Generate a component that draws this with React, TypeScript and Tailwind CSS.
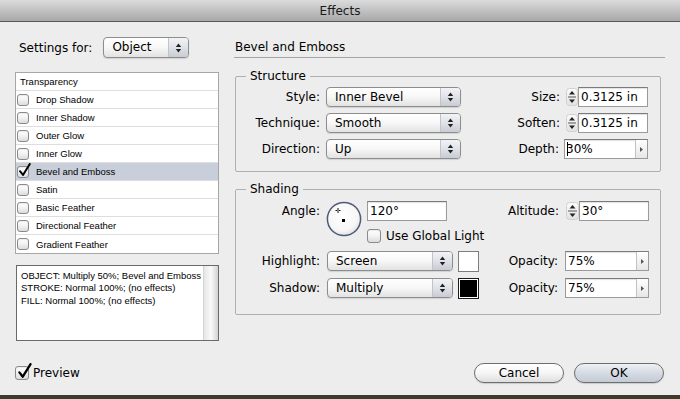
import React from "react";

function CheckBox({ checked = false, big = false }: { checked?: boolean; big?: boolean }) {
  return (
    <span
      className={`relative inline-block shrink-0 rounded-[3px] border border-[#8a8a8a] bg-gradient-to-b from-white via-[#f2f2f2] to-[#dcdcdc] shadow-[inset_0_1px_1px_rgba(0,0,0,0.08)] ${
        big ? "w-[14px] h-[14px]" : "w-[12px] h-[12px]"
      }`}
    >
      {checked && (
        <svg
          className={`absolute ${big ? "-top-[4px] left-[1px] w-[15px] h-[16px]" : "-top-[4px] left-[0px] w-[13px] h-[14px]"}`}
          viewBox="0 0 13 14"
        >
          <path d="M2 8.2 L5 12 L11.8 1" fill="none" stroke="#000" strokeWidth="2" strokeLinecap="round" strokeLinejoin="round" />
        </svg>
      )}
    </span>
  );
}

function UpDown() {
  return (
    <svg width="7" height="12" viewBox="0 0 7 12">
      <polygon points="0.8,5 3.5,1.6 6.2,5" fill="#222" />
      <polygon points="0.8,7 3.5,10.4 6.2,7" fill="#222" />
    </svg>
  );
}

function Popup({ value, className }: { value: string; className: string }) {
  return (
    <div
      className={`flex h-[20px] shrink-0 overflow-hidden rounded-[4px] border border-[#8d8d8d] bg-gradient-to-b from-white via-[#f7f7f7] to-[#e2e2e2] shadow-[0_1px_1px_rgba(0,0,0,0.12)] ${className}`}
    >
      <span className="flex-1 pl-[8px] text-[12px] leading-[18px]">{value}</span>
      <span className="flex w-[20px] items-center justify-center border-l border-[#c0c3c8] bg-gradient-to-b from-[#f2f3f6] via-[#dfe2e7] to-[#c8ccd3]">
        <UpDown />
      </span>
    </div>
  );
}

function Stepper({ w = 12 }: { w?: number }) {
  return (
    <svg width={w} height="20" viewBox={`0 0 ${w} 20`} className="shrink-0">
      <defs>
        <linearGradient id="stp" x1="0" y1="0" x2="0" y2="1">
          <stop offset="0" stopColor="#fbfbfb" />
          <stop offset="1" stopColor="#e2e2e2" />
        </linearGradient>
      </defs>
      <rect x="0.5" y="1.5" width={w - 1} height="17" rx="3" fill="url(#stp)" stroke="#d0d0d0" />
      <polygon points={`${w / 2 - 3},7.5 ${w / 2},4 ${w / 2 + 3},7.5`} fill="#222" />
      <line x1="2" x2={w - 2} y1="10" y2="10" stroke="#555" strokeWidth="1" />
      <polygon points={`${w / 2 - 3},12.5 ${w / 2},16 ${w / 2 + 3},12.5`} fill="#222" />
    </svg>
  );
}

function Field({ value, className, caret = false }: { value: string; className: string; caret?: boolean }) {
  return (
    <div
      className={`flex h-[20px] shrink-0 items-center border border-[#9a9a9a] border-t-[#7b7b7b] bg-white pl-[2px] text-[12px] leading-[18px] shadow-[inset_0_1px_1px_rgba(0,0,0,0.12)] ${className}`}
    >
      {caret && <span className="-mr-[2px] inline-block h-[14px] w-[1px] bg-black" />}
      <span>{value}</span>
    </div>
  );
}

function ComboField({ value, caret = false }: { value: string; caret?: boolean }) {
  return (
    <div className="flex h-[20px] w-[84px] shrink-0 border border-[#9a9a9a] border-t-[#7b7b7b] bg-white shadow-[inset_0_1px_1px_rgba(0,0,0,0.12)]">
      <div className="flex flex-1 items-center pl-[2px] text-[12px] leading-[18px]">
        {caret && <span className="-mr-[2px] inline-block h-[14px] w-[1px] bg-black" />}
        <span>{value}</span>
      </div>
      <div className="flex w-[12px] items-center justify-center border-l border-[#c2c2c2] bg-gradient-to-b from-white to-[#e6e6e6]">
        <svg width="5" height="7" viewBox="0 0 5 7">
          <polygon points="1,1 4,3.5 1,6" fill="#555" />
        </svg>
      </div>
    </div>
  );
}

function AngleDial() {
  return (
    <svg width="36" height="36" viewBox="0 0 36 36" className="shrink-0">
      <defs>
        <radialGradient id="dial" cx="0.45" cy="0.4" r="0.65">
          <stop offset="0" stopColor="#ffffff" />
          <stop offset="0.7" stopColor="#f6f6f6" />
          <stop offset="1" stopColor="#dcdcdc" />
        </radialGradient>
      </defs>
      <circle cx="18" cy="18" r="16.6" fill="url(#dial)" stroke="#4d5b79" strokeWidth="1.5" />
      <line x1="9.5" x2="14.5" y1="9.5" y2="9.5" stroke="#111" strokeWidth="1" strokeDasharray="2 1" />
      <line x1="12" x2="12" y1="7" y2="12" stroke="#111" strokeWidth="1" strokeDasharray="2 1" />
      <rect x="16" y="18" width="3" height="3" fill="#000" />
    </svg>
  );
}

function PillButton({ label, primary = false }: { label: string; primary?: boolean }) {
  return (
    <div
      className={`flex h-[20px] w-[90px] items-center justify-center rounded-full border border-[#6e6e6e] text-[12px] leading-[18px] shadow-[0_1px_1px_rgba(0,0,0,0.15)] ${
        primary
          ? "bg-gradient-to-b from-[#eef1f5] via-[#d5dbe3] to-[#c3cbd6]"
          : "bg-gradient-to-b from-white via-[#f6f6f6] to-[#dedede]"
      }`}
    >
      {label}
    </div>
  );
}

const effects = [
  "Drop Shadow",
  "Inner Shadow",
  "Outer Glow",
  "Inner Glow",
  "Bevel and Emboss",
  "Satin",
  "Basic Feather",
  "Directional Feather",
  "Gradient Feather",
];

export default function App() {
  return (
    <div className="h-[399px] w-[680px] overflow-hidden bg-[#3b3d2a] font-['DejaVu_Sans','Liberation_Sans',sans-serif] text-black">
      <div className="flex h-[395px] flex-col bg-[#ededed]">
        {/* title bar */}
        <div className="flex h-[22px] shrink-0 items-center justify-center border-b border-[#595959] bg-gradient-to-b from-[#dcdcdc] to-[#a8a8a8] text-[12px] leading-[16px] text-[#1a1a1a]">
          Effects
        </div>

        <div className="flex flex-1">
          {/* left column */}
          <div className="flex w-[219px] shrink-0 flex-col pl-[15px] pt-[15px]">
            <div className="flex h-[21px] items-center">
              <span className="ml-[4px] text-[12px] leading-[16px]">Settings for:</span>
              <Popup value="Object" className="ml-[11px] h-[21px] w-[86px]" />
            </div>

            <div className="mt-[14px] w-[204px] border border-[#a7a7a7] bg-white font-['Liberation_Sans',sans-serif] text-[9.5px] leading-[17px]">
              <div className="h-[18px] border-b border-[#dedede] pl-[4px]">Transparency</div>
              {effects.map((name, i) => (
                <div
                  key={name}
                  className={`flex h-[18px] items-center pl-[1px] ${i < effects.length - 1 ? "border-b border-[#dedede]" : ""} ${
                    name === "Bevel and Emboss" ? "bg-[#c9cfda]" : ""
                  }`}
                >
                  <CheckBox checked={name === "Bevel and Emboss"} />
                  <span className="ml-[7px]">{name}</span>
                </div>
              ))}
            </div>

            <div className="ml-[1px] mt-[11px] flex h-[76px] w-[203px] border border-[#6a6a6a] bg-white">
              <div className="flex-1 pl-[4px] pt-[4px] font-['Liberation_Sans',sans-serif] text-[9.5px] leading-[12.3px]">
                <div>OBJECT: Multiply 50%; Bevel and Emboss</div>
                <div>STROKE: Normal 100%; (no effects)</div>
                <div>FILL: Normal 100%; (no effects)</div>
              </div>
              <div className="w-[15px] border-l border-[#d4d4d4] bg-gradient-to-r from-[#e6e6e6] via-[#fafafa] to-[#d2d2d2]" />
            </div>
          </div>

          {/* right column */}
          <div className="ml-[15px] flex w-[431px] flex-col pt-[15px]">
            <div className="h-[21px] border-b border-[#a4a4a4] pl-[1px] text-[12px] leading-[20px]">Bevel and Emboss</div>

            <fieldset className="ml-[1px] mt-[10px] w-[426px] rounded-[2px] border border-[#b0b0b0] pb-[12px] pr-[12px] pt-[3px]">
              <legend className="ml-[10px] px-[4px] text-[12px] leading-[16px]">Structure</legend>
              <div className="flex flex-col gap-[6px]">
                <div className="flex h-[20px] items-center">
                  <span className="w-[84px] text-right text-[12px]">Style:</span>
                  <Popup value="Inner Bevel" className="ml-[6px] w-[135px]" />
                  <span className="flex-1 text-right text-[12px]">Size:</span>
                  <div className="ml-[6px] flex">
                    <Stepper />
                    <Field value="0.3125 in" className="w-[70px]" />
                  </div>
                </div>
                <div className="flex h-[20px] items-center">
                  <span className="w-[84px] text-right text-[12px]">Technique:</span>
                  <Popup value="Smooth" className="ml-[6px] w-[135px]" />
                  <span className="flex-1 text-right text-[12px]">Soften:</span>
                  <div className="ml-[6px] flex">
                    <Stepper />
                    <Field value="0.3125 in" className="w-[70px]" />
                  </div>
                </div>
                <div className="flex h-[20px] items-center">
                  <span className="w-[84px] text-right text-[12px]">Direction:</span>
                  <Popup value="Up" className="ml-[6px] w-[135px]" />
                  <span className="flex-1 text-right text-[12px]">Depth:</span>
                  <div className="ml-[5px]">
                    <ComboField value="30%" caret />
                  </div>
                </div>
              </div>
            </fieldset>

            <fieldset className="ml-[1px] mt-[9px] w-[426px] rounded-[2px] border border-[#b0b0b0] pb-[16px] pr-[11px] pt-[4px]">
              <legend className="ml-[10px] px-[4px] text-[12px] leading-[16px]">Shading</legend>
              <div className="flex items-start">
                <span className="flex h-[20px] w-[84px] items-center justify-end text-[12px]">Angle:</span>
                <div className="ml-[6px]">
                  <AngleDial />
                </div>
                <div className="ml-[5px] flex flex-col">
                  <Field value="120°" className="w-[80px]" />
                  <div className="mt-[8px] flex h-[14px] items-center">
                    <CheckBox big />
                    <span className="ml-[5px] whitespace-nowrap text-[12px] leading-[14px]">Use Global Light</span>
                  </div>
                </div>
                <div className="flex h-[20px] flex-1 items-center justify-end">
                  <span className="text-[12px]">Altitude:</span>
                  <div className="ml-[7px] flex">
                    <Stepper w={13} />
                    <Field value="30°" className="w-[70px]" />
                  </div>
                </div>
              </div>

              <div className="mt-[8px] flex h-[20px] items-center">
                <span className="w-[84px] text-right text-[12px]">Highlight:</span>
                <Popup value="Screen" className="ml-[7px] w-[126px]" />
                <div className="ml-[5px] h-[21px] w-[21px] border border-[#7d7d7d] bg-white" />
                <span className="flex-1 text-right text-[12px]">Opacity:</span>
                <div className="ml-[7px]">
                  <ComboField value="75%" />
                </div>
              </div>

              <div className="mt-[7px] flex h-[20px] items-center">
                <span className="w-[84px] text-right text-[12px]">Shadow:</span>
                <Popup value="Multiply" className="ml-[7px] w-[126px]" />
                <div className="ml-[5px] h-[21px] w-[21px] border border-[#1a1a1a] bg-white p-[1px]">
                  <div className="h-full w-full bg-black" />
                </div>
                <span className="flex-1 text-right text-[12px]">Opacity:</span>
                <div className="ml-[7px]">
                  <ComboField value="75%" />
                </div>
              </div>
            </fieldset>
          </div>
        </div>

        {/* footer */}
        <div className="mb-[12px] flex h-[20px] shrink-0 items-center pl-[15px] pr-[16px]">
          <CheckBox checked big />
          <span className="ml-[4px] text-[12px]">Preview</span>
          <div className="flex-1" />
          <PillButton label="Cancel" />
          <div className="w-[10px]" />
          <PillButton label="OK" primary />
        </div>
      </div>
    </div>
  );
}
